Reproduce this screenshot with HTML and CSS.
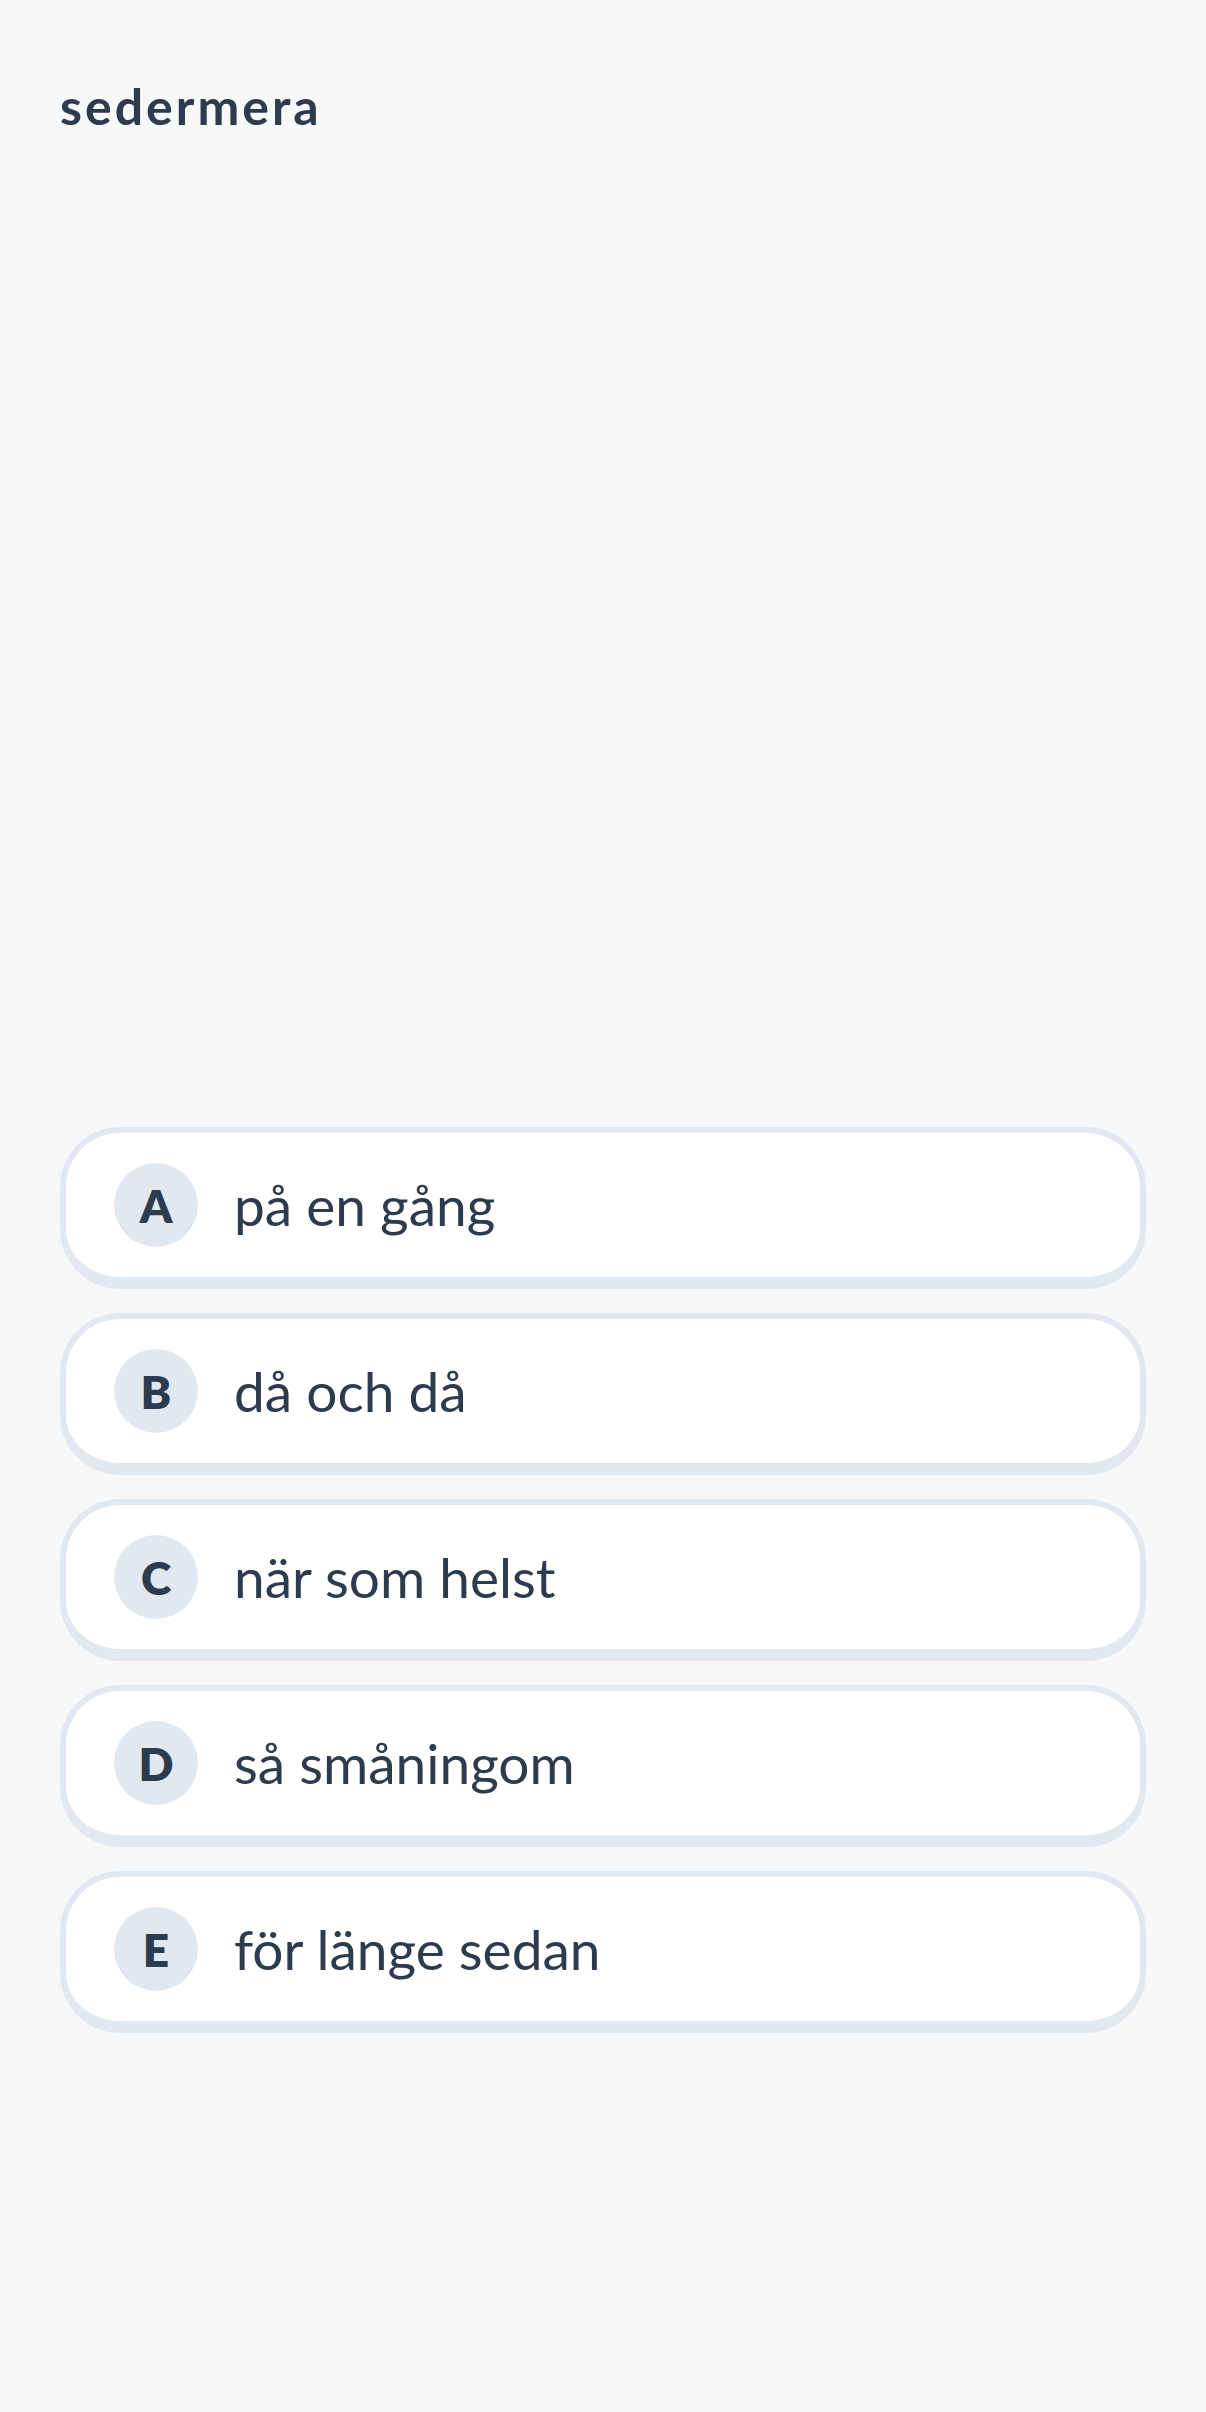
FILE: index.html
```html
<!DOCTYPE html>
<html>
<head>
    <meta name="viewport" content="width=device-width, initial-scale=1.0">
<link rel="stylesheet" href="styles.css">
</head>
<body>

<div class='page'>
  <h1 class='word'>sedermera</h1>

  <div class='choices'>
    <div class='choice'><span class='letter'>A</span><span class='answer'>på en gång</span></div>
    <div class='choice'><span class='letter'>B</span><span class='answer'>då och då</span></div>
    <div class='choice'><span class='letter'>C</span><span class='answer'>när som helst</span></div>
    <div class='choice'><span class='letter'>D</span><span class='answer'>så småningom</span></div>
    <div class='choice'><span class='letter'>E</span><span class='answer'>för länge sedan</span></div>
  </div>
</div>

</body>
</html>
```

FILE: styles.css
```css
* {box-sizing: border-box;}
body {margin: 0; background: #f7f8fa; color: #2c3b4d; font-family: "Lato", "Open Sans", sans-serif;}
.page {height: 100vh; display: flex; flex-direction: column; padding: 0 60px 379px 60px;}
.word {margin: 81px 0 0 0; font-size: 50px; line-height: 50px; font-weight: 700; letter-spacing: 3px;}
.choices {margin-top: auto; display: flex; flex-direction: column; gap: 24px;}
.choice {height: 162px; background: #fff; border: 6px solid #e2e8f0; border-bottom-width: 12px; border-radius: 60px; display: flex; align-items: center; padding: 0 48px; gap: 36px;}
.letter {width: 84px; height: 84px; border-radius: 50%; background: #e2e8f0; display: flex; align-items: center; justify-content: center; font-size: 46px; font-weight: 800;}
.answer {font-size: 55px;}
```
